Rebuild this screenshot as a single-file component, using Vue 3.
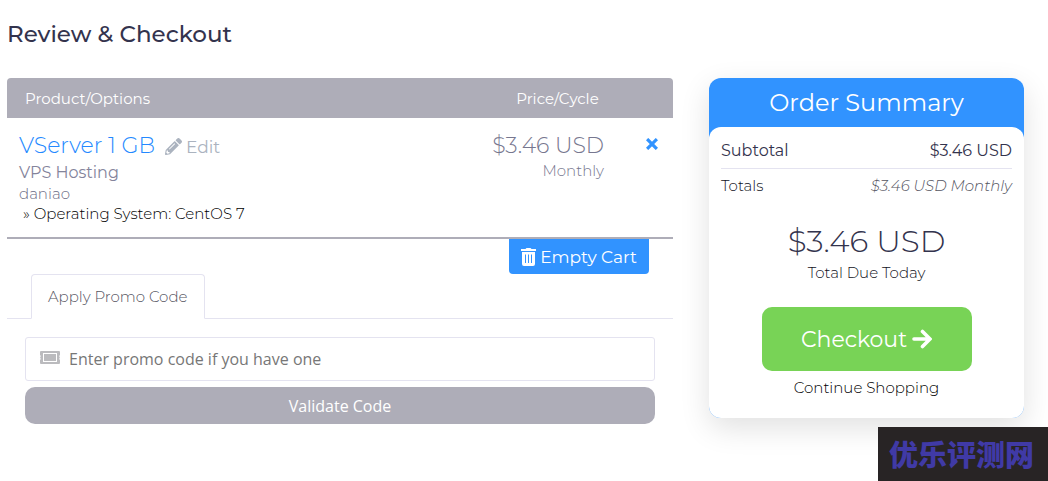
<script setup>
import { ref } from 'vue'

const promo = ref('')
const item = {
  name: 'VServer 1 GB',
  group: 'VPS Hosting',
  domain: 'daniao',
  option: '» Operating System: CentOS 7',
  price: '$3.46 USD',
  cycle: 'Monthly'
}
</script>

<template>
  <div class="page">
    <h1>Review &amp; Checkout</h1>
    <div class="columns">
      <main>
        <table class="cart">
          <thead>
            <tr>
              <th class="product" scope="col">Product/Options</th>
              <th class="price" scope="col">Price/Cycle</th>
              <td class="remove"></td>
            </tr>
          </thead>
          <tbody>
            <tr>
              <td class="product">
                <div class="title">
                  <span class="name">{{ item.name }}</span>
                  <a class="edit" href="#">
                    <svg viewBox="0 0 512 512" width="17" height="17" aria-hidden="true">
                      <path fill="currentColor" d="M498 142l-46 46c-5 5-12 5-17 0L324 77c-5-5-5-12 0-17l46-46c19-19 49-19 68 0l60 60c19 19 19 49 0 68zm-214-42L22 362 0 484c-3 17 12 31 28 28l122-21 262-262c5-5 5-12 0-17L301 100c-5-5-12-5-17 0zM124 340c-5-6-5-14 0-20l154-154c6-5 14-5 20 0s5 14 0 20L144 340c-6 5-14 5-20 0zm-36 84h48v36l-64 12-32-31 12-65h36v48z" />
                    </svg>
                    Edit
                  </a>
                </div>
                <div class="group">{{ item.group }}</div>
                <div class="domain">{{ item.domain }}</div>
                <div class="option">{{ item.option }}</div>
              </td>
              <td class="price">
                <div class="amount">{{ item.price }}</div>
                <div class="cycle">{{ item.cycle }}</div>
              </td>
              <td class="remove">
                <button type="button" aria-label="Remove">
                  <svg viewBox="0 0 12 12" width="12" height="12" aria-hidden="true">
                    <path d="M2.200 2.200l7.600 7.600M9.800 2.200l-7.600 7.600" fill="none" stroke="currentColor" stroke-width="3.200" stroke-linecap="square" />
                  </svg>
                </button>
              </td>
            </tr>
          </tbody>
        </table>

        <div class="empty-row">
          <button type="button" class="empty">
            <svg viewBox="0 0 15 18" width="15" height="18" aria-hidden="true">
              <path fill="currentColor" fill-rule="evenodd" d="M0 1h4.500l1-1h4l1 1H15v2H0zM1 4h13v12q0 2-2 2H3q-2 0-2-2zM4 6.500v8.500h1V6.500zm3 0v8.500h1V6.500zm3 0v8.500h1V6.500z" />
            </svg>
            Empty Cart
          </button>
        </div>

        <div class="tabs">
          <button type="button" class="tab">Apply Promo Code</button>
        </div>

        <form class="promo" @submit.prevent>
          <div class="field">
            <label for="promo-code" aria-label="Promo code">
              <svg viewBox="0 0 20 16" width="20" height="16" aria-hidden="true">
                <path fill="currentColor" fill-rule="evenodd" d="M1 0h18q1 0 1 1v3a1.500 1.500 0 0 0 0 2.500 1.500 1.500 0 0 0 0 2.500V12q0 1-1 1H1q-1 0-1-1V9a1.500 1.500 0 0 0 0-2.500A1.500 1.500 0 0 0 0 4V1q0-1 1-1zM3 2v9h14V2zM4 3h12v7H4z" />
              </svg>
            </label>
            <input id="promo-code" v-model="promo" type="text" placeholder="Enter promo code if you have one" />
          </div>
          <button type="submit" class="validate">Validate Code</button>
        </form>
      </main>

      <aside class="summary">
        <h2>Order Summary</h2>
        <div class="card">
          <div class="line subtotal"><span>Subtotal</span><span>$3.46 USD</span></div>
          <div class="line totals"><span>Totals</span><em>$3.46 USD Monthly</em></div>
          <div class="due">$3.46 USD</div>
          <div class="due-label">Total Due Today</div>
          <button type="button" class="checkout">
            Checkout
            <svg viewBox="0 0 20 20" width="20" height="20" aria-hidden="true">
              <path d="M2 10h15M10.500 2.500L18 10l-7.500 7.500" fill="none" stroke="currentColor" stroke-width="3.600" stroke-linecap="round" />
            </svg>
          </button>
          <a class="continue" href="#">Continue Shopping</a>
        </div>
      </aside>
    </div>
    <div class="watermark">优乐评测网</div>
  </div>
</template>

<style>
body {
  background: #fff;
  overflow: hidden;
}
</style>

<style scoped>
.page {
  box-sizing: border-box;
  position: relative;
  min-height: 100vh;
  padding: 20px 24px 0 7px;
  font-family: Montserrat, Inter, "Liberation Sans", sans-serif;
  font-weight: 400;
  color: #33334d;
}
* { box-sizing: border-box; }
button {
  border: 0;
  margin: 0;
  font-family: inherit;
  font-weight: inherit;
  cursor: pointer;
}
svg { display: block; flex: none; }
a { text-decoration: none; }
h1 {
  margin: 0 0 30px;
  font-size: 23px;
  line-height: 28px;
  font-weight: 500;
}
.columns {
  display: grid;
  grid-template-columns: 666fr 315fr;
  gap: 36px;
  align-items: start;
}
.cart {
  width: 100%;
  table-layout: fixed;
  border-collapse: separate;
  border-spacing: 0;
}
.cart th, .cart td {
  padding: 0;
  vertical-align: top;
  text-align: left;
}
.cart thead th, .cart thead td {
  height: 40px;
  padding-top: 2px;
  background: #aeadb8;
  color: #fff;
  font-size: 15px;
  line-height: 38px;
  font-weight: 400;
}
.cart thead .product { border-radius: 4px 0 0 0; padding-left: 18px; }
.cart thead .price { width: 147px; text-align: center; }
.cart thead .remove { width: 42px; border-radius: 0 4px 0 0; }
.cart tbody td {
  height: 121px;
  border-bottom: 2px solid #aeadb8;
}
.cart tbody .product { padding: 12px 0 0 12px; }
.cart tbody .price {
  padding: 12px 27px 0 0;
  text-align: right;
  color: #77778f;
}
.cart tbody .remove { padding: 17px 0 0 15px; }
.remove button {
  padding: 0;
  background: none;
  color: #3193ff;
}
.title {
  display: flex;
  align-items: center;
  gap: 10px;
  height: 31px;
}
.name { font-size: 22px; font-weight: 300; color: #2489ff; }
.edit {
  display: flex;
  align-items: center;
  gap: 4px;
  padding-top: 2px;
  font-size: 17px;
  color: #abb3bf;
}
.group {
  font-size: 16px;
  line-height: 23px;
  color: #84849b;
}
.domain {
  font-size: 15px;
  font-weight: 300;
  line-height: 20px;
  color: #6c6c86;
}
.option {
  padding-left: 4px;
  font-size: 15px;
  font-weight: 300;
  line-height: 20px;
  color: #000;
}
.amount { font-size: 22px; line-height: 31px; font-weight: 300; }
.cycle { font-size: 15px; line-height: 19px; font-weight: 300; }
.empty-row {
  display: flex;
  justify-content: flex-end;
  padding-right: 24px;
}
.empty {
  display: flex;
  align-items: center;
  justify-content: center;
  gap: 4px;
  height: 35px;
  padding: 0 12px;
  border-radius: 0 0 4px 4px;
  background: #3193ff;
  color: #fff;
  font-size: 17px;
}
.tabs {
  display: flex;
  padding-left: 24px;
  border-bottom: 1px solid #e4e3f0;
}
.tab {
  height: 45px;
  margin-bottom: -1px;
  padding: 0 16px;
  border: 1px solid #e4e3f0;
  border-bottom-color: #fff;
  border-radius: 4px 4px 0 0;
  background: #fff;
  color: #55555f;
  font-size: 15px;
  font-weight: 300;
}
.promo {
  padding: 18px 18px 0;
  font-family: "Open Sans", sans-serif;
}
.field {
  display: flex;
  align-items: center;
  height: 44px;
  padding-left: 14px;
  border: 1px solid #e4e3f0;
  border-radius: 3px;
  color: #bbbbbe;
}
.field input {
  flex: 1;
  min-width: 0;
  height: 40px;
  padding: 0 9px;
  border: 0;
  outline: 0;
  background: none;
  font-family: inherit;
  font-size: 16px;
  color: #444;
}
.field input::placeholder { color: #777; opacity: 1; }
.validate {
  display: block;
  width: 100%;
  height: 37px;
  margin-top: 6px;
  padding: 0;
  border-radius: 10px;
  background: #aeadb8;
  color: #fff;
  font-size: 16px;
  font-weight: 500;
}
.summary {
  border-radius: 12px;
  background: #3193ff;
  box-shadow: 0 10px 30px rgba(0, 0, 0, 0.12);
}
h2 {
  margin: 0;
  height: 49px;
  color: #fff;
  text-align: center;
  font-size: 24px;
  line-height: 50px;
  font-weight: 400;
}
.card {
  display: flex;
  flex-direction: column;
  align-items: center;
  padding: 5px 12px 18px;
  border-radius: 12px;
  background: #fff;
}
.line {
  display: flex;
  justify-content: space-between;
  align-items: center;
  width: 100%;
}
.subtotal {
  height: 37px;
  border-bottom: 1px solid #e4e3f0;
  font-size: 16px;
}
.totals { height: 32px; font-size: 15px; font-weight: 300; color: #111122; }
.totals em { color: #55555f; }
.due {
  margin-top: 20px;
  font-size: 31px;
  line-height: 40px;
  font-weight: 300;
}
.due-label {
  font-size: 15px;
  line-height: 24px;
  font-weight: 300;
  color: #111122;
}
.checkout {
  display: flex;
  align-items: center;
  justify-content: center;
  gap: 5px;
  width: 210px;
  height: 64px;
  margin-top: 22px;
  border-radius: 10px;
  background: #78d356;
  color: #fff;
  font-size: 22px;
}
.continue {
  margin-top: 5px;
  font-size: 15px;
  line-height: 24px;
  font-weight: 300;
  color: #000;
}
.watermark {
  position: absolute;
  right: 0;
  bottom: 0;
  padding: 0 14px 2px 11px;
  background: #282425;
  color: #403aa6;
  font-family: "Noto Sans CJK SC", sans-serif;
  font-size: 29px;
  line-height: 52px;
  font-weight: 900;
  white-space: nowrap;
}
</style>
